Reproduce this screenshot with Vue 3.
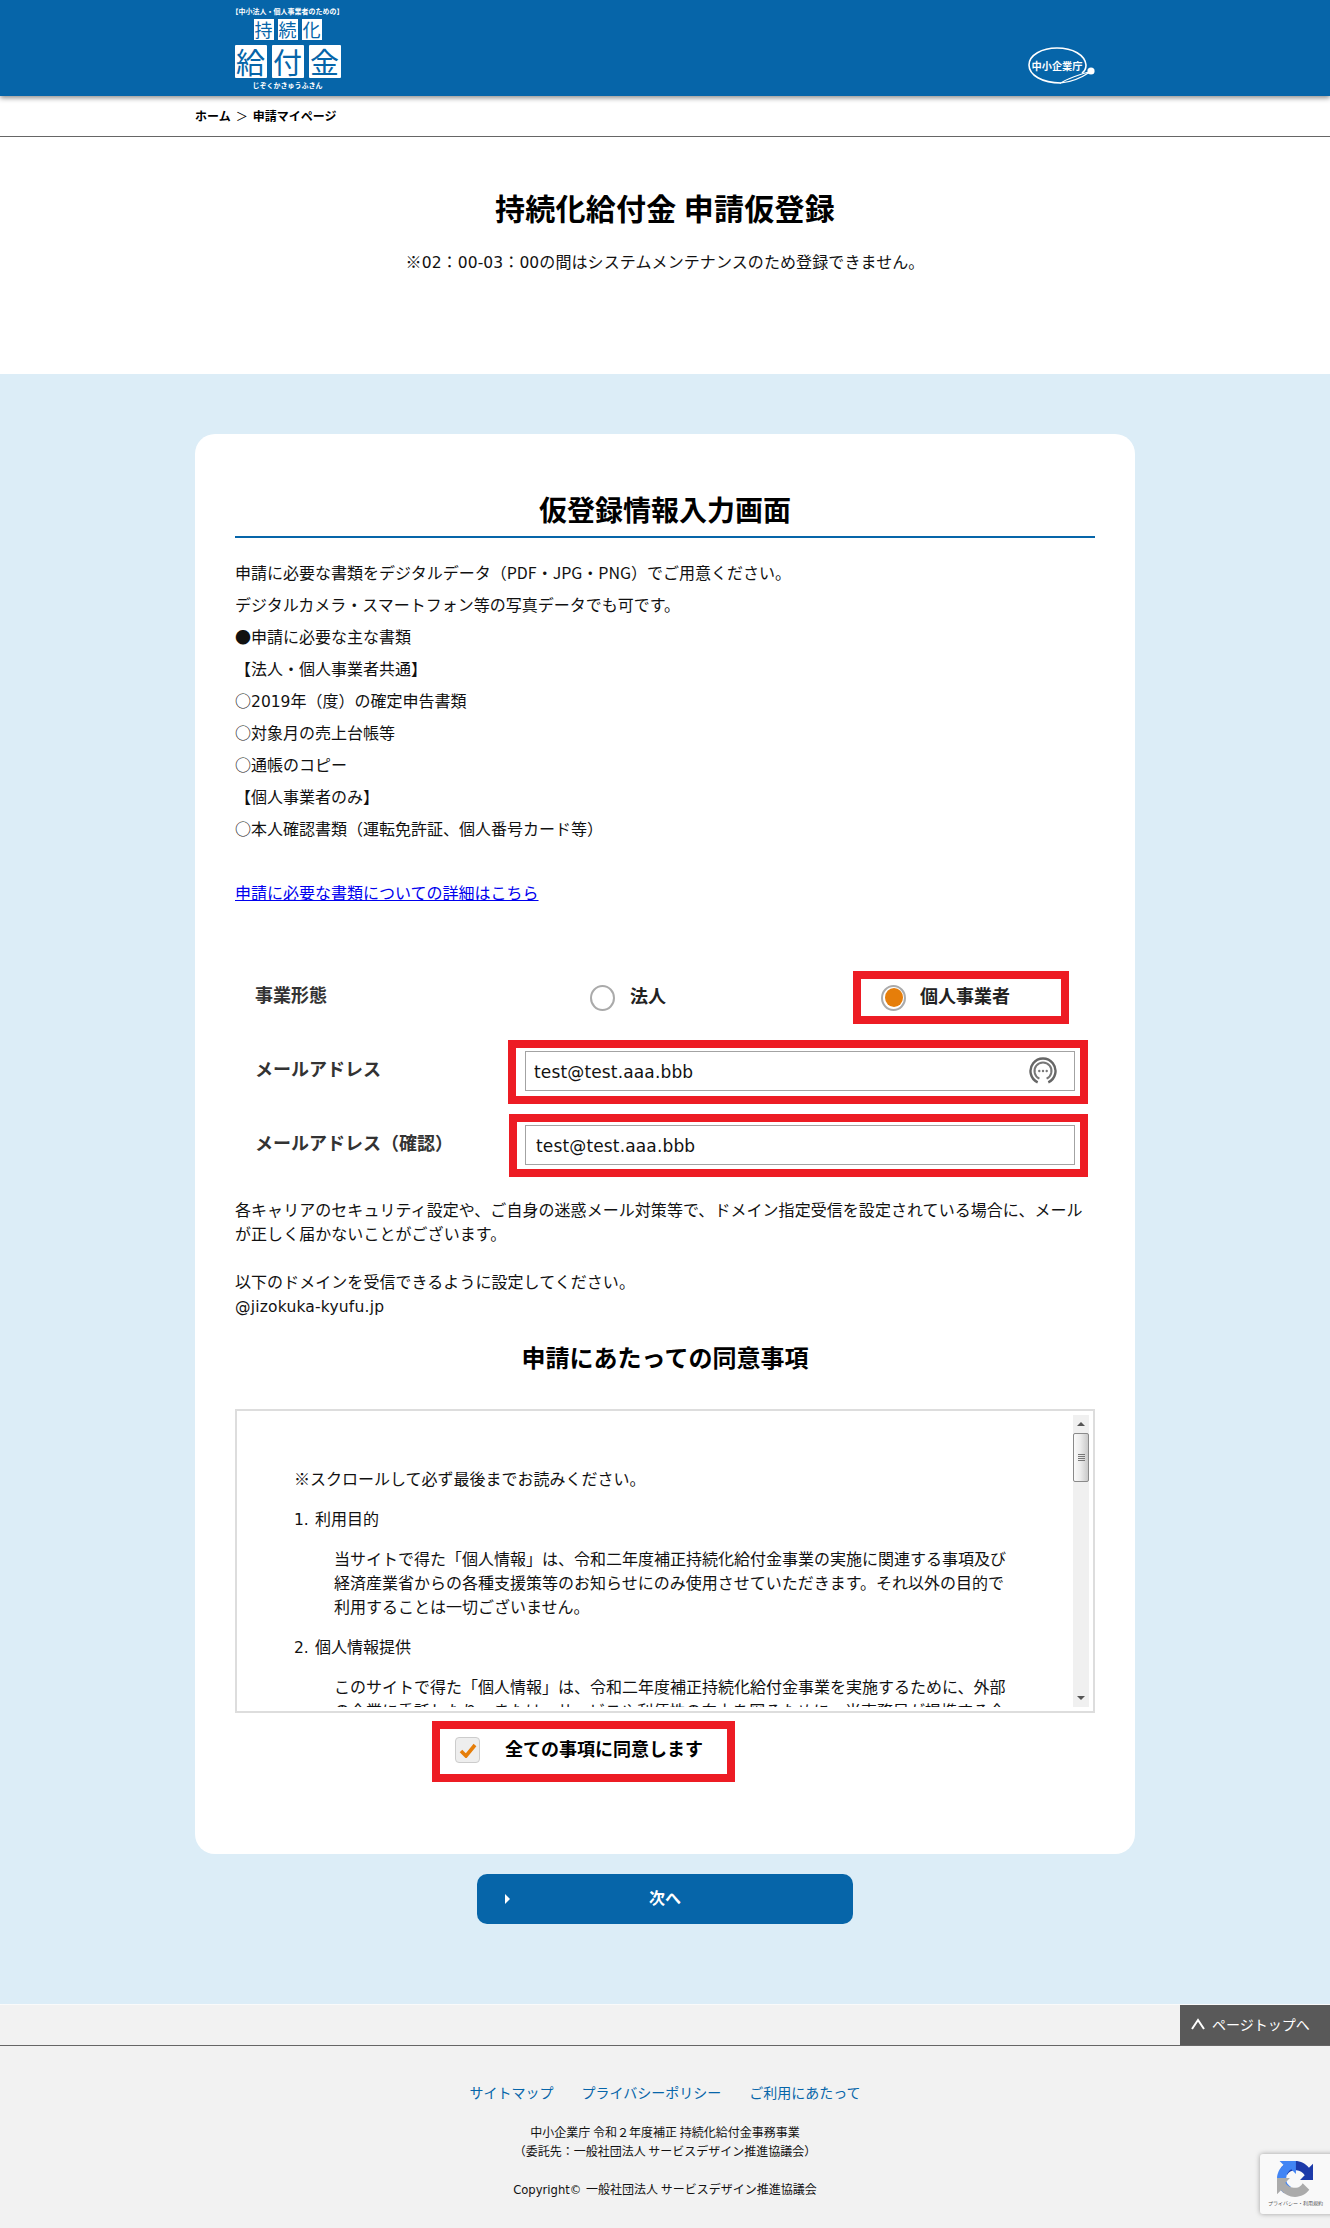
<script setup>
const docLines = [
  { post: '申請に必要な書類をデジタルデータ（PDF・JPG・PNG）でご用意ください。' },
  { post: 'デジタルカメラ・スマートフォン等の写真データでも可です。' },
  { post: '●申請に必要な主な書類' },
  { post: '【法人・個人事業者共通】' },
  { pre: '○', lat: '2019', post: '年（度）の確定申告書類' },
  { post: '○対象月の売上台帳等' },
  { post: '○通帳のコピー' },
  { post: '【個人事業者のみ】' },
  { post: '○本人確認書類（運転免許証、個人番号カード等）' }
]
const email = 'test@test.aaa.bbb'
</script>

<template>
  <div class="page">
    <header class="header">
      <div class="header-inner">
        <div class="logo">
          <div class="logo-top">【中小法人・個人事業者のための】</div>
          <div class="tiles-small"><span>持</span><span>続</span><span>化</span></div>
          <div class="tiles-big"><span>給</span><span>付</span><span>金</span></div>
          <div class="logo-kana">じぞくかきゅうふきん</div>
        </div>
        <svg class="agency" viewBox="0 0 70 40" width="70" height="40">
          <path d="M33 36 C14 36 1 28 1 18 C1 8 14 1 29 1 C45 1 57 8 58 18 C58 21 57 24 54 26" fill="none" stroke="#fff" stroke-width="1.6" />
          <path d="M33 36 C44 35 56 29 62 25 C55 26 36 33 33 36 Z" fill="none" stroke="#fff" stroke-width="1.2" />
          <circle cx="63" cy="24" r="3.6" fill="#fff" />
          <text x="29" y="22.5" text-anchor="middle" class="agency-text">中小企業庁</text>
        </svg>
      </div>
    </header>

    <nav class="crumb"><b>ホーム</b><span class="crumb-sep">＞</span><b>申請マイページ</b></nav>

    <div class="intro">
      <h1>持続化給付金 申請仮登録</h1>
      <p>※<span class="lat">02</span>：<span class="lat">00-03</span>：<span class="lat">00</span>の間はシステムメンテナンスのため登録できません。</p>
    </div>

    <main class="main">
      <section class="card">
        <h2 class="card-title">仮登録情報入力画面</h2>
        <div class="docs">
          <p v-for="line in docLines" :key="line.post">{{ line.pre }}<span v-if="line.lat" class="lat">{{ line.lat }}</span>{{ line.post }}</p>
        </div>
        <a class="doc-link" href="#">申請に必要な書類についての詳細はこちら</a>

        <div class="row row-type">
          <div class="row-label type-label">事業形態</div>
          <label class="radio-opt opt-plain"><span class="radio"></span><span class="opt-text">法人</span></label>
          <label class="radio-opt red red-radio"><span class="radio on"></span><span class="opt-text">個人事業者</span></label>
        </div>

        <div class="row row-mail">
          <div class="row-label mail-label">メールアドレス</div>
          <div class="red red-input">
            <input class="text" :value="email" readonly />
            <svg class="pw-icon" viewBox="0 0 28 28" width="28" height="28">
              <path d="M8.7 25.3 A12.5 12.5 0 1 1 19.3 25.3" fill="none" stroke="#666" stroke-width="2.4" />
              <path d="M10.4 21.7 A8.5 8.5 0 1 1 17.6 21.7" fill="none" stroke="#777" stroke-width="2" />
              <circle cx="10.3" cy="14" r="1.2" fill="#777" /><circle cx="14" cy="14" r="1.2" fill="#777" /><circle cx="17.7" cy="14" r="1.2" fill="#777" />
            </svg>
          </div>
        </div>

        <div class="row row-mail2">
          <div class="row-label mail-label2">メールアドレス（確認）</div>
          <div class="red red-input2">
            <input class="text text2" :value="email" readonly />
          </div>
        </div>

        <div class="notice">
          <p>各キャリアのセキュリティ設定や、ご自身の迷惑メール対策等で、ドメイン指定受信を設定されている場合に、メールが正しく届かないことがございます。</p>
          <p class="notice-gap">以下のドメインを受信できるように設定してください。<br /><span class="lat domain">@jizokuka-kyufu.jp</span></p>
        </div>

        <h3 class="agree-title">申請にあたっての同意事項</h3>

        <div class="terms">
          <div class="terms-scroll">
            <p class="t-lead">※スクロールして必ず最後までお読みください。</p>
            <p class="t-head"><span class="lat t-num">1.</span>利用目的</p>
            <p class="t-body">当サイトで得た「個人情報」は、令和二年度補正持続化給付金事業の実施に関連する事項及び経済産業省からの各種支援策等のお知らせにのみ使用させていただきます。それ以外の目的で利用することは一切ございません。</p>
            <p class="t-head"><span class="lat t-num">2.</span>個人情報提供</p>
            <p class="t-body">このサイトで得た「個人情報」は、令和二年度補正持続化給付金事業を実施するために、外部の企業に委託したり、または、サービスや利便性の向上を図るために、当事務局が提携する企</p>
          </div>
          <div class="sbar">
            <span class="sb-up"></span>
            <div class="sb-thumb"><i></i><i></i><i></i><i></i></div>
            <span class="sb-down"></span>
          </div>
        </div>

        <label class="red agree">
          <span class="check">
            <svg viewBox="0 0 18 15" width="18" height="15"><path d="M2 8 L7 13 L16 2" fill="none" stroke="#e67e0a" stroke-width="3.6" /></svg>
          </span>
          <span class="agree-text">全ての事項に同意します</span>
        </label>
      </section>

      <button class="next" type="button"><span class="next-arrow"></span>次へ</button>
    </main>

    <footer class="footer">
      <div class="foot-top">
        <a class="pagetop" href="#">
          <svg viewBox="0 0 16 12" width="16" height="12"><path d="M2 11 L8 2 L14 11" fill="none" stroke="#fff" stroke-width="2" /></svg>
          <span>ページトップへ</span>
        </a>
      </div>
      <div class="foot-links">
        <a href="#">サイトマップ</a>
        <a href="#">プライバシーポリシー</a>
        <a href="#">ご利用にあたって</a>
      </div>
      <div class="foot-addr">中小企業庁 令和２年度補正 持続化給付金事務事業<br />（委託先：一般社団法人 サービスデザイン推進協議会）</div>
      <div class="foot-copy"><span class="lat-sm">Copyright©</span> 一般社団法人 サービスデザイン推進協議会</div>
    </footer>

    <div class="recaptcha">
      <svg viewBox="0 0 64 64" width="36" height="36">
        <path d="M64 31.955l-.033-1.37V4.687l-7.16 7.16C50.948 4.674 42.033.093 32.05.093c-10.4 0-19.622 4.96-25.458 12.64l11.736 11.86c1.15-2.127 2.784-3.955 4.75-5.33 2.05-1.6 4.952-2.91 9.973-2.91.606 0 1.074.07 1.418.203 6.22.49 11.612 3.924 14.788 8.904l-8.307 8.307c10.522-.04 22.41-.066 27.45-.002" fill="#1c3aa9" />
        <path d="M31.862.094l-1.37.033H4.594l7.16 7.16C4.58 13.147 0 22.06 0 32.046c0 10.4 4.96 19.622 12.64 25.458L24.5 45.768c-2.127-1.15-3.955-2.784-5.33-4.75-1.6-2.05-2.91-4.952-2.91-9.973 0-.606.07-1.074.203-1.418.49-6.22 3.924-11.612 8.904-14.788l8.307 8.307c-.04-10.522-.066-22.41-.002-27.45" fill="#4285f4" />
        <path d="M.001 32.045l.033 1.37v25.898l7.16-7.16c5.86 7.173 14.774 11.754 24.76 11.754 10.4 0 19.622-4.96 25.458-12.64L45.676 39.408c-1.15 2.127-2.784 3.955-4.75 5.33-2.05 1.6-4.952 2.91-9.973 2.91-.606 0-1.074-.07-1.418-.203-6.22-.49-11.612-3.924-14.788-8.904l8.307-8.307c-10.522.04-22.41.066-27.45.002" fill="#ababab" />
      </svg>
      <div class="rc-text">プライバシー・利用規約</div>
    </div>
  </div>
</template>

<style>
html, body { margin: 0; padding: 0; }
</style>

<style scoped>
.page {
  position: relative;
  width: 1330px;
  height: 2228px;
  overflow: hidden;
  background: #fff;
  color: #111;
  font-family: "Noto Sans CJK JP", "Noto Sans", sans-serif;
  font-size: 16px;
}
p, h1, h2, h3 { margin: 0; }
.lat { font-family: "DejaVu Sans", sans-serif; font-size: 15.5px; line-height: 1; }
.domain { letter-spacing: .2px; }
.lat-sm { font-family: "DejaVu Sans", sans-serif; font-size: 11.6px; line-height: 1; margin-right: 2px; }

.header {
  position: relative;
  z-index: 1;
  height: 96px;
  background: #0665a9;
  box-shadow: 0 2px 5px rgba(0, 0, 0, .45);
}
.header-inner {
  width: 860px;
  margin: 0 auto;
  height: 96px;
  display: flex;
  justify-content: space-between;
  box-sizing: border-box;
}
.logo {
  width: 105px;
  display: flex;
  flex-direction: column;
  align-items: center;
  color: #fff;
  font-weight: 700;
}
.logo-top { font-size: 7px; line-height: 10px; margin-top: 6px; white-space: nowrap; }
.tiles-small { display: flex; gap: 4px; margin-top: 3px; }
.tiles-small span {
  width: 20px; height: 21px; background: #fff; color: #0665a9;
  font-size: 18px; line-height: 21px; text-align: center; font-weight: 400;
}
.tiles-big { display: flex; gap: 5px; margin-top: 5px; }
.tiles-big span {
  width: 32px; height: 33px; background: #fff; color: #0665a9; border-radius: 1px;
  font-size: 29px; line-height: 32px; text-align: center; font-weight: 400;
}
.logo-kana { font-size: 7px; line-height: 10px; margin-top: 2px; white-space: nowrap; }
.agency { margin-top: 47px; margin-right: -3px; }
.agency-text { font-size: 10.2px; font-weight: 700; fill: #fff; }

.crumb {
  height: 38px;
  padding-bottom: 2px;
  border-bottom: 1px solid #666;
  padding-left: 195px;
  display: flex;
  align-items: center;
  font-size: 12px;
  color: #000;
}
.crumb-sep { width: 22px; text-align: center; }

.intro { height: 237px; box-sizing: border-box; padding-top: 49.5px; text-align: center; }
.intro h1 { font-size: 30px; line-height: 40px; font-weight: 700; color: #000; letter-spacing: .25px; }
.intro p { margin-top: 22px; line-height: 24px; letter-spacing: .1px; }

.main {
  height: 1630px;
  box-sizing: border-box;
  padding-top: 60px;
  background: #dcedf7;
  display: flex;
  flex-direction: column;
  align-items: center;
}
.card {
  width: 940px;
  height: 1420px;
  box-sizing: border-box;
  padding: 54.5px 40px 72px;
  background: #fff;
  border-radius: 20px;
}
.card-title {
  font-size: 28px;
  line-height: 40px;
  padding-bottom: 7.5px;
  border-bottom: 2px solid #0665a9;
  text-align: center;
  font-weight: 700;
  color: #000;
}
.docs { margin-top: 17.5px; }
.docs p { line-height: 32px; height: 32px; }
.doc-link {
  display: block;
  margin-top: 32px;
  line-height: 32px;
  color: #0000ee;
  text-decoration: underline;
}

.row { display: flex; align-items: center; padding-left: 20px; }
.row-label { font-size: 18px; font-weight: 700; color: #333; padding-bottom: 8px; }
.row-type { margin-top: 63.5px; height: 53px; }
.type-label { width: 335px; }
.radio-opt { display: flex; align-items: center; font-size: 18px; font-weight: 700; color: #222; }
.opt-text { padding-bottom: 6px; }
.opt-plain { width: 263px; gap: 15px; }
.radio {
  width: 25px; height: 26px; box-sizing: border-box;
  border: 2px solid #aaa; border-radius: 50%; background: #fff;
  display: flex; align-items: center; justify-content: center;
}
.radio.on::after { content: ""; width: 18px; height: 19px; border-radius: 50%; background: #e67e0a; }
.red { border: 8px solid #ed1c24; box-sizing: border-box; background: #fff; }
.red-radio { width: 216px; height: 53px; padding-left: 20px; gap: 14px; }

.row-mail { margin-top: 16px; height: 64px; }
.mail-label { width: 253px; }
.red-input { position: relative; width: 580px; height: 64px; padding: 3px 5px 5px 9px; }
.row-mail2 { margin-top: 10px; height: 63px; }
.mail-label2 { width: 254px; white-space: nowrap; }
.red-input2 { width: 579px; height: 63px; padding: 3px 5px 4px 8px; }
.text {
  display: block;
  width: 100%;
  height: 40px;
  box-sizing: border-box;
  border: 1.5px solid #a3a3a3;
  padding: 2px 8px 0;
  outline: none;
  font-family: "DejaVu Sans", sans-serif;
  font-size: 17px;
  letter-spacing: .15px;
  color: #111;
  background: #fff;
}
.text2 { padding-left: 10px; }
.pw-icon { position: absolute; right: 23px; top: 9px; }

.notice { margin-top: 20px; line-height: 24px; letter-spacing: .05px; }
.notice-gap { margin-top: 24px; }
.agree-title { margin-top: 23px; font-size: 24px; line-height: 34px; font-weight: 700; text-align: center; color: #000; }

.terms {
  position: relative;
  margin-top: 35px;
  height: 304px;
  box-sizing: border-box;
  border: 2px solid #ddd;
  padding: 4px;
}
.terms-scroll { height: 292px; overflow: hidden; box-sizing: border-box; padding: 50.5px 0 0 53px; line-height: 24px; }
.t-head { margin-top: 16px; }
.t-num { display: inline-block; width: 21px; line-height: 1; }
.t-body { margin-top: 16px; margin-left: 40px; width: 673px; }
.sbar {
  position: absolute;
  top: 4px; right: 4px;
  width: 16px; height: 292px;
  background: #f0f0f0;
}
.sb-up, .sb-down {
  position: absolute; left: 4px; width: 0; height: 0;
  border-left: 4px solid transparent; border-right: 4px solid transparent;
}
.sb-up { top: 7px; border-bottom: 4px solid #555; }
.sb-down { bottom: 7px; border-top: 4px solid #555; }
.sb-thumb {
  position: absolute; top: 18px; left: 0;
  width: 16px; height: 49px; box-sizing: border-box;
  border: 1px solid #8a8a8a; border-radius: 2px;
  background: linear-gradient(90deg, #fafafa, #ececec 45%, #c9c9c9);
  display: flex; flex-direction: column; align-items: center; justify-content: center; gap: 1px;
}
.sb-thumb i { display: block; width: 7px; height: 1px; background: #777; }

.agree {
  display: flex;
  align-items: flex-start;
  width: 303px;
  height: 61px;
  margin: 8px 0 0 197px;
  padding: 8px 0 0 15px;
  gap: 25px;
  font-size: 18px;
  font-weight: 700;
  color: #000;
}
.agree-text { line-height: 24px; margin-top: -1px; }
.check {
  width: 25px; height: 26px; box-sizing: border-box;
  background: #eee; border: 1px solid #ccc; border-radius: 4px;
  display: flex; align-items: center; justify-content: center;
}

.next {
  position: relative;
  margin-top: 20px;
  width: 376px;
  height: 50px;
  border: 0;
  border-radius: 10px;
  background: #0665a9;
  color: #fff;
  font-family: inherit;
  font-size: 16px;
  font-weight: 700;
  line-height: 46px;
  padding: 0 0 4px;
}
.next-arrow {
  position: absolute; left: 28px; top: 20px; width: 0; height: 0;
  border-top: 5px solid transparent; border-bottom: 5px solid transparent; border-left: 5px solid #fff;
}

.footer { height: 224px; background: #f2f2f2; border-top: 1px solid #fafafa; box-sizing: border-box; text-align: center; color: #111; }
.foot-top { height: 41px; box-sizing: border-box; border-bottom: 1px solid #666; display: flex; justify-content: flex-end; }
.pagetop {
  width: 150px; height: 40px; background: #595959; color: #fff; text-decoration: none;
  font-size: 14px; display: flex; align-items: center; gap: 6px; padding: 0 0 2px 10px; box-sizing: border-box;
}
.foot-links { margin-top: 35.5px; display: flex; justify-content: center; gap: 28px; font-size: 14px; line-height: 20px; }
.foot-links a { color: #0665a9; text-decoration: none; }
.foot-addr { margin-top: 20.5px; font-size: 12px; line-height: 19px; }
.foot-copy { margin-top: 19px; font-size: 12px; line-height: 19px; }

.recaptcha {
  position: absolute;
  left: 1260px;
  top: 2154px;
  width: 76px;
  height: 60px;
  background: #f9f9f9;
  border-radius: 3px;
  box-shadow: 0 0 5px rgba(0, 0, 0, .35);
  box-sizing: border-box;
  padding-top: 7px;
  padding-left: 17px;
}
.recaptcha svg { display: block; }
.rc-text { font-size: 5px; line-height: 6px; color: #555; margin: 3px 0 0 -9px; white-space: nowrap; }
</style>
